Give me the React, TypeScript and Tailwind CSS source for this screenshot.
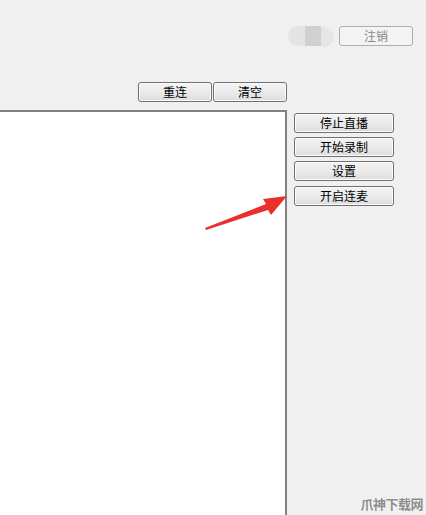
const btn =
  "flex items-center justify-center h-[20px] rounded-[3px] border border-[#707070] bg-gradient-to-b from-[#f3f3f3] via-[#ebebeb] to-[#dcdcdc] text-[12px] leading-none text-black shadow-[inset_0_0_0_1px_#fcfcfc]";

export default function App() {
  return (
    <div
      className="relative flex h-[515px] w-[426px] flex-col overflow-hidden bg-[#f0f0f0]"
      style={{ fontFamily: '"Noto Sans CJK SC", "Liberation Sans", sans-serif' }}
    >
      {/* top bar */}
      <div className="flex items-center justify-end gap-[5px] pr-[13px] pt-[26px]">
        <div className="relative h-[20px] w-[46px]">
          <div className="absolute left-0 top-0 h-[20px] w-[22px] rounded-full bg-[#e4e4e4]" />
          <div className="absolute right-0 top-[1px] h-[20px] w-[22px] rounded-full bg-[#e6e6e6]" />
          <div className="absolute left-[17px] top-0 h-[20px] w-[16px] bg-[#d0d0d0]" />
        </div>
        <div className="flex h-[20px] w-[74px] items-center justify-center rounded-[3px] border border-[#adadad] bg-[#f4f4f4] text-[12px] leading-none text-[#8a8a8a]">
          注销
        </div>
      </div>

      {/* second row */}
      <div className="mt-[36px] flex gap-[1px] pl-[138px]">
        <div className={`${btn} w-[74px]`}>重连</div>
        <div className={`${btn} w-[74px]`}>清空</div>
      </div>

      {/* main */}
      <div className="mt-[8px] flex flex-1">
        <div className="w-[287px] border-r-2 border-t-2 border-[#828282] bg-white" />
        <div className="flex flex-col gap-[4px] pl-[7px] pt-[3px]">
          <div className={`${btn} w-[100px]`}>停止直播</div>
          <div className={`${btn} w-[100px]`}>开始录制</div>
          <div className={`${btn} w-[100px]`}>设置</div>
          <div className={`${btn} mt-[1px] w-[100px]`}>开启连麦</div>
        </div>
      </div>

      {/* red arrow */}
      <svg className="absolute left-[200px] top-[190px]" width="92" height="45" viewBox="0 0 92 45">
        <polygon points="5,38 66,14 63,9 87,6 71,25 68,20 6,40" fill="#e8302c" />
      </svg>

      {/* watermark */}
      <div
        className="absolute bottom-[2px] right-[3px] text-[13px] font-bold tracking-[-0.5px] text-[#8d8d8d]"
        style={{ textShadow: "0 0 2px #fff" }}
      >
        爪神下载网
      </div>
    </div>
  );
}
